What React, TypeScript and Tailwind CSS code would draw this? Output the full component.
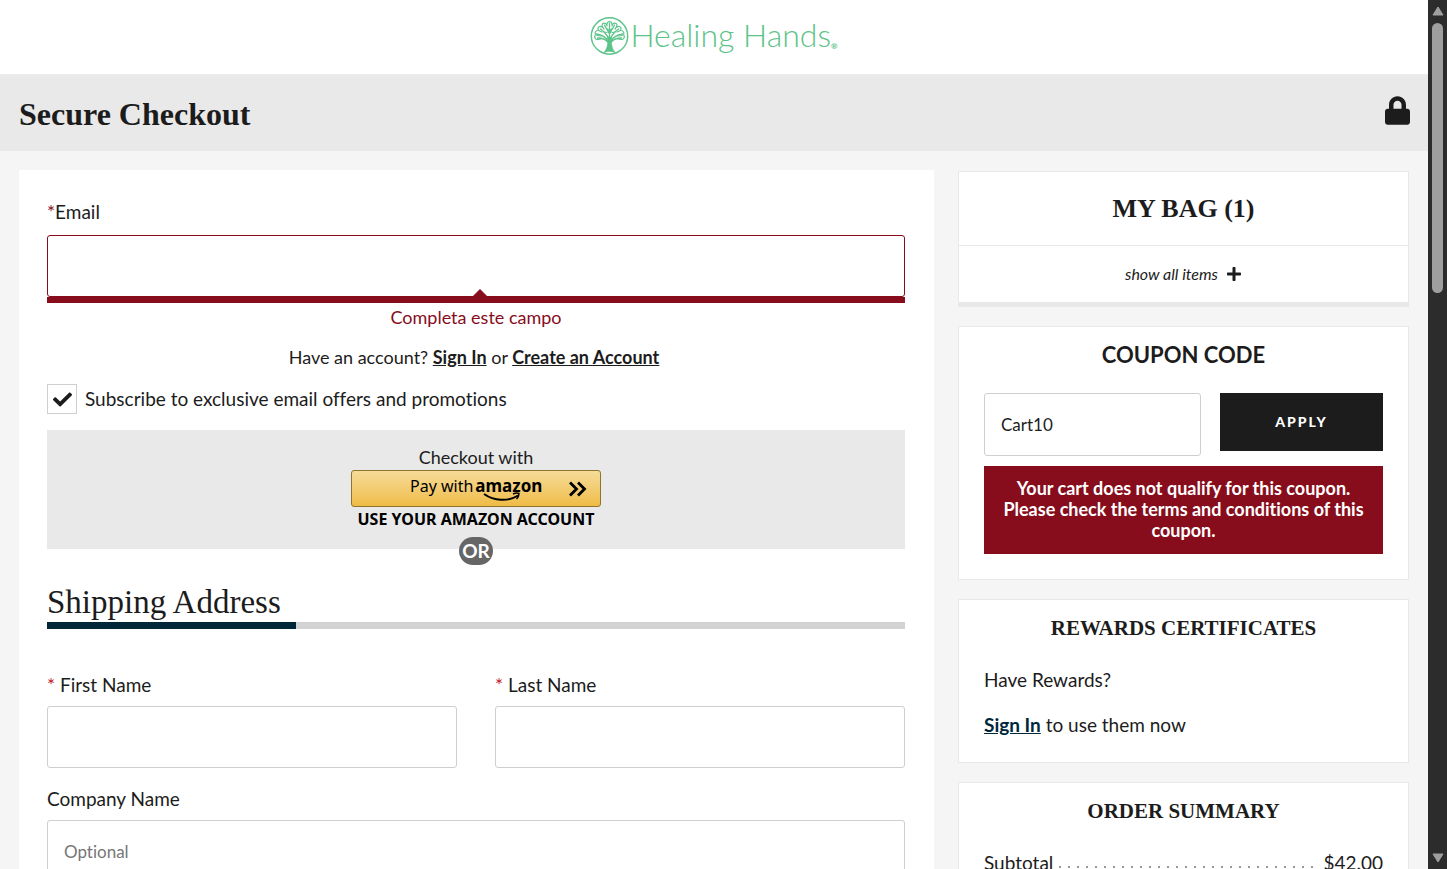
import { useState } from "react";
import type { ReactNode } from "react";
import { FaCheck, FaLock, FaPlus } from "react-icons/fa";

const inputClass =
  "block w-full px-4 bg-white border border-[#cfcfcf] rounded-[3px] text-[17px] text-[#1c1c1c] placeholder:text-[#767676] outline-none";

export default function App() {
  return (
    <div className="flex h-screen overflow-hidden bg-[#f5f5f5] font-['Lato',sans-serif] [font-variant-ligatures:none] text-[19px] leading-6 text-[#1c1c1c]">
      <div className="flex-1 min-w-0 overflow-y-auto [scrollbar-width:none]">
        <SiteHeader />

        {/* Title bar */}
        <div className="flex items-center justify-between h-[75px] pl-[19px] pr-[18px] bg-[#e9e9e9]">
          <h1 className="font-['Liberation_Serif',serif] text-[32px] leading-10 font-bold">Secure Checkout</h1>
          <FaLock className="w-[25px] h-[29px] mb-1.5" aria-label="Secure" />
        </div>

        <div className="grid grid-cols-[minmax(0,915fr)_minmax(0,451fr)] gap-6 px-[19px] pt-[19px] pb-10 items-start">
          <CheckoutForm />
          <aside className="flex flex-col gap-[19px] pt-px">
            <Bag />
            <Coupon />
            <Rewards />
            <OrderSummary />
          </aside>
        </div>
      </div>
      <ScrollRail />
    </div>
  );
}

function SiteHeader() {
  return (
    <header className="flex justify-center h-[76px] pt-4 bg-white border-b-2 border-[#ebebeb]">
      <a href="#" className="flex items-start h-10 text-[#5cc389]">
        <TreeLogo />
        <span className="ml-px text-[32px] leading-[38px] font-light">Healing Hands</span>
        <span className="self-end text-[8px] leading-5 font-bold">®</span>
      </a>
    </header>
  );
}

function TreeLogo() {
  return (
    <svg width="39" height="40" viewBox="0 0 39 40" fill="none" stroke="currentColor" strokeLinecap="round" aria-hidden="true">
      <circle cx="19.500" cy="20" r="18.200" strokeWidth="1.400" />
      {/* Trunk and roots */}
      <path d="M17.500 20c.8 7 .3 12-3.500 16.500 3-1.500 8-1.500 11 0C21.500 32 21 27 21.800 20l-2.300 2z" fill="currentColor" strokeWidth=".6" />
      {/* Branches */}
      <path
        strokeWidth="1.300"
        d="M19.500 25V7M19.500 18l-5-9M19.500 18l5-9M18.500 23c-1-4-4-7-8-10M20.500 23c1-4 4-7 8-10M18 25c-2-4-6-6-11.500-7M21 25c2-4 6-6 11.500-7M17.500 26c-2-3-6-4-10-4M21.500 26c2-3 6-4 10-4"
      />
      {/* Leaves */}
      <path
        strokeWidth="1.200"
        d="M17 10c-.5-3 1-4.500 2.500-4.500S22.500 7 22 10M22.500 9c.5-2.500 4-2.500 4.500 0 .3 1.500-1 3-2 4M16.500 9c-.5-2.500-4-2.500-4.500 0-.3 1.500 1 3 2 4M27 11c2-1.500 4.500 0 4 2-.3 1.500-2 2.500-4 3M12 11c-2-1.500-4.500 0-4 2 .3 1.500 2 2.500 4 3M31 14.500c2.500 0 3.500 2.500 2.500 4-1 1.300-3 1.500-5 1.500M8 14.500c-2.500 0-3.500 2.500-2.500 4 1 1.300 3 1.500 5 1.500M34 19.500c1 2-.5 4-2.500 4-1.500 0-3-.3-4.500-1M5 19.500c-1 2 .5 4 2.500 4 1.500 0 3-.3 4.500-1M17.500 13l2 2 2-2M14 16l3 .5M25 16l-3 .5"
      />
    </svg>
  );
}

function CheckoutForm() {
  const [subscribed, setSubscribed] = useState(true);

  return (
    <main className="pl-7 pr-[29px] pt-[30px] pb-10 bg-white">
      <label htmlFor="email" className="block">
        <span className="text-[#870d1c]">*</span>Email
      </label>
      <div className="relative mt-[11px] border-b-6 border-[#870d1c]">
        <input
          id="email"
          type="email"
          className="block w-full h-[62px] px-4 bg-white border border-[#870d1c] rounded-[3px] outline-none"
        />
        <svg className="absolute left-1/2 bottom-0 -translate-x-1 w-4 h-2" viewBox="0 0 16 8" aria-hidden="true">
          <path d="M0 8l8-8 8 8z" fill="#870d1c" />
        </svg>
      </div>
      <p className="mt-0.5 text-center text-lg leading-6 text-[#870d1c]">Completa este campo</p>

      <p className="mt-4 pr-1 text-center text-lg leading-6">
        Have an account?{" "}
        <a href="#" className="font-bold underline">Sign In</a> or{" "}
        <a href="#" className="font-bold underline">Create an Account</a>
      </p>

      <label className="flex items-center gap-2 mt-[15px]">
        <span className="grid place-items-center w-[30px] h-[30px] border border-[#cfcfcf]">
          <input
            type="checkbox"
            checked={subscribed}
            onChange={(e) => setSubscribed(e.target.checked)}
            className="col-start-1 row-start-1 appearance-none w-full h-full"
          />
          {subscribed && <FaCheck className="col-start-1 row-start-1 w-[19px] h-[19px] pointer-events-none" />}
        </span>
        Subscribe to exclusive email offers and promotions
      </label>

      {/* Amazon Pay */}
      <div className="relative flex flex-col items-center mt-4 pt-[15px] pb-[18px] bg-[#e9e9e9]">
        <p className="text-lg leading-6">Checkout with</p>
        <button
          type="button"
          className="grid grid-cols-[1fr_auto] items-center w-[250px] h-[37px] mt-px pl-[58px] pr-3 border border-[#8f7430] rounded-[3px] bg-linear-to-b from-[#f6dc98] to-[#efbc43] text-black"
        >
          <span className="flex items-start gap-0.5 h-[30px] font-['Noto_Sans',sans-serif] text-base leading-6">
            Pay with
            <span className="relative text-[17px] leading-6 font-bold">
              amazon
              <svg className="absolute left-2 top-[18px] w-10 h-3" viewBox="0 0 40 12" fill="none" stroke="currentColor" aria-hidden="true">
                <path d="M1 2c10 7 24 8 34 1.500" strokeWidth="2" />
                <path d="M30 2c3-1.500 5-1 6-.5 0 2-1 4-2.500 5.500" strokeWidth="1.500" />
              </svg>
            </span>
          </span>
          <svg className="w-5 h-4" viewBox="0 0 20 16" fill="none" stroke="currentColor" strokeWidth="2.800" aria-hidden="true">
            <path d="M2 1.500L8.500 8 2 14.500M10 1.500L16.500 8 10 14.500" />
          </svg>
        </button>
        <p className="font-['Noto_Sans',sans-serif] text-base leading-6 font-bold text-black">USE YOUR AMAZON ACCOUNT</p>
        <span className="absolute -bottom-4 grid place-items-center w-[34px] h-7 rounded-full bg-[#666] text-[19px] leading-6 font-bold text-white">
          OR
        </span>
      </div>

      <h2 className="mt-[35px] font-['Liberation_Serif',serif] text-[33px] leading-9">Shipping Address</h2>
      <div className="h-[7px] mt-0.5 bg-[#d3d3d3]">
        <div className="w-[249px] h-full bg-[#00263a]" />
      </div>

      <div className="grid grid-cols-2 gap-[38px] mt-11">
        <Field id="first-name" label="First Name" required />
        <Field id="last-name" label="Last Name" required />
      </div>
      <div className="mt-[19px]">
        <Field id="company" label="Company Name" placeholder="Optional" />
      </div>
    </main>
  );
}

function Field({ id, label, required, placeholder }: { id: string; label: string; required?: boolean; placeholder?: string }) {
  return (
    <div>
      <label htmlFor={id} className="block mb-[9px]">
        {required && <span className="text-[#c0172b]">* </span>}
        {label}
      </label>
      <input id={id} type="text" placeholder={placeholder} className={`${inputClass} h-[62px]`} />
    </div>
  );
}

function Panel({ title, serif, children }: { title: string; serif?: boolean; children: ReactNode }) {
  return (
    <section className="px-[25px] pt-4 pb-[25px] bg-white border border-[#e8e8e8]">
      <h2
        className={
          serif
            ? "text-center font-['Liberation_Serif',serif] text-[21px] leading-6 font-bold"
            : "text-center text-[22px] leading-6 font-bold"
        }
      >
        {title}
      </h2>
      {children}
    </section>
  );
}

function Bag() {
  return (
    <section className="bg-white border border-b-5 border-[#e8e8e8] text-center">
      <h2 className="pt-[17px] pb-4 font-['Liberation_Serif',serif] text-[26px] leading-10 font-bold border-b border-[#e8e8e8]">
        MY BAG (1)
      </h2>
      <button type="button" className="flex items-center justify-center gap-2 w-full h-14 text-base italic">
        show all items
        <FaPlus className="w-4 h-4" />
      </button>
    </section>
  );
}

function Coupon() {
  const [code, setCode] = useState("Cart10");

  return (
    <Panel title="COUPON CODE">
      <form className="flex items-start gap-[19px] mt-[26px]" onSubmit={(e) => e.preventDefault()}>
        <input
          type="text"
          aria-label="Coupon code"
          value={code}
          onChange={(e) => setCode(e.target.value)}
          className={`${inputClass} flex-1 min-w-0 h-[63px]`}
        />
        <button type="submit" className="w-[163px] h-[58px] bg-[#1c1c1c] text-sm font-black tracking-[2px] text-white">
          APPLY
        </button>
      </form>
      <p className="mt-2.5 px-4 pt-3 pb-[13px] bg-[#870d1c] text-center text-lg leading-[21px] font-bold text-white">
        Your cart does not qualify for this coupon. Please check the terms and conditions of this coupon.
      </p>
    </Panel>
  );
}

function Rewards() {
  return (
    <Panel title="REWARDS CERTIFICATES" serif>
      <p className="mt-7">Have Rewards?</p>
      <p className="mt-[21px]">
        <a href="#" className="font-bold underline text-[#00263a]">Sign In</a> to use them now
      </p>
    </Panel>
  );
}

function OrderSummary() {
  return (
    <Panel title="ORDER SUMMARY" serif>
      <dl className="flex items-center gap-1 mt-7">
        <dt>Subtotal</dt>
        <svg className="flex-1 min-w-0 h-1 mt-2" aria-hidden="true">
          <line x1="2" y1="2" x2="100%" y2="2" stroke="#999" strokeWidth="2" strokeDasharray="2 7" />
        </svg>
        <dd>$42.00</dd>
      </dl>
    </Panel>
  );
}

function ScrollRail() {
  return (
    <div className="flex flex-col items-center w-[19px] py-1.5 bg-[#2c2c2c]" aria-hidden="true">
      <svg className="w-3 h-[10px]" viewBox="0 0 12 10">
        <path d="M6 1l5 8H1z" fill="#9f9f9f" stroke="#9f9f9f" strokeLinejoin="round" />
      </svg>
      <div className="w-[11px] h-[270px] mt-[7px] rounded-full bg-[#9f9f9f]" />
      <svg className="w-3 h-[10px] mt-auto" viewBox="0 0 12 10">
        <path d="M6 9l5-8H1z" fill="#9f9f9f" stroke="#9f9f9f" strokeLinejoin="round" />
      </svg>
    </div>
  );
}
